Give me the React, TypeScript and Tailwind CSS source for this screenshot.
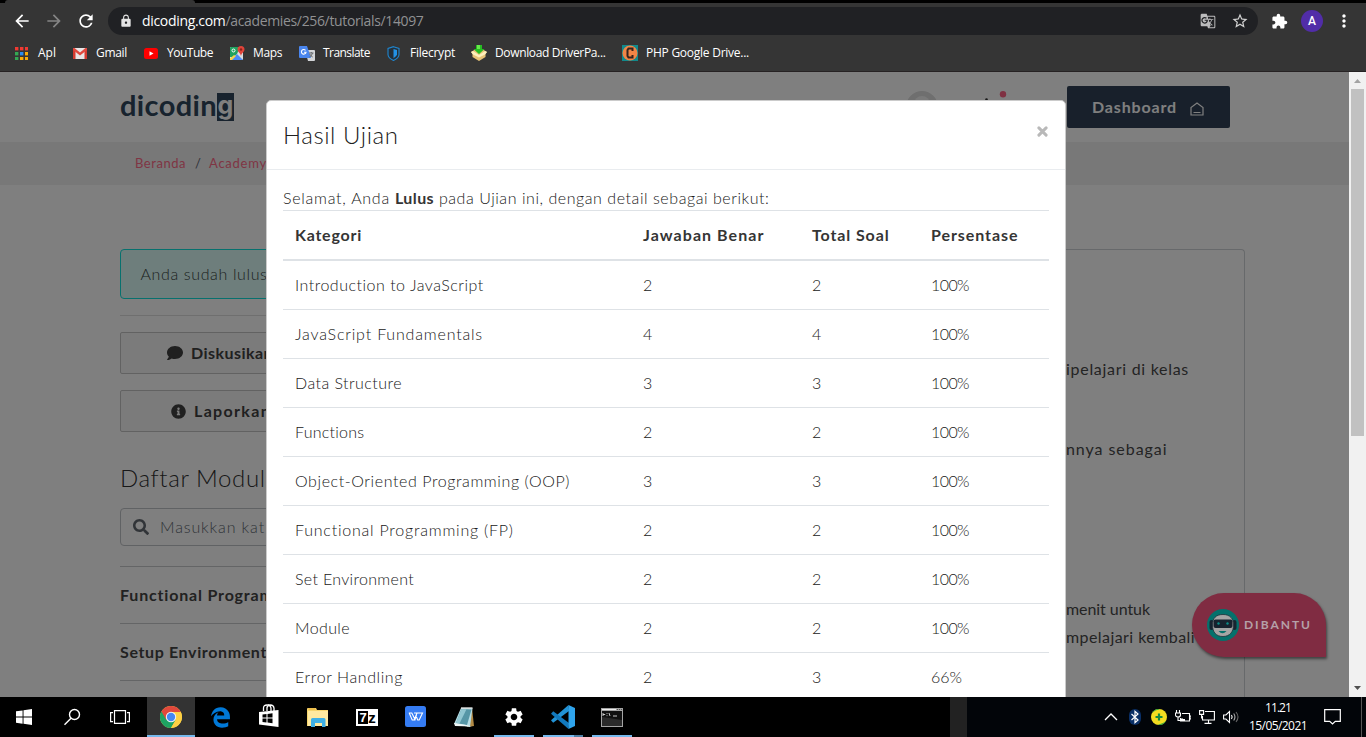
import { useLayoutEffect, useRef, useState, type ReactNode } from "react";
import { FaComment, FaInfoCircle, FaSearch } from "react-icons/fa";
import { FaEdgeLegacy } from "react-icons/fa6";
import { MdArrowBack, MdArrowForward, MdExtension, MdGTranslate, MdLock, MdMoreVert, MdRefresh, MdSettings, MdStarBorder } from "react-icons/md";

/** Single-line text whose tracking is adjusted so that it spans `w` pixels. */
function Fit({ w, children, className = "" }: { w: number; children: string; className?: string }) {
  const ref = useRef<HTMLSpanElement>(null);
  const [spacing, setSpacing] = useState(0);
  useLayoutEffect(() => {
    const el = ref.current;
    if (!el) return;
    el.style.letterSpacing = "0px";
    const natural = el.getBoundingClientRect().width;
    setSpacing((w - natural) / children.length);
    el.style.letterSpacing = `${(w - natural) / children.length}px`;
  }, [w, children]);
  return (
    <span ref={ref} className={`inline-block whitespace-pre ${className}`} style={{ letterSpacing: `${spacing}px` }}>
      {children}
    </span>
  );
}

const AppsIcon = () => (
  <svg width="13" height="13" viewBox="0 0 13 13">
    {["#f03a32", "#f03a32", "#f03a32", "#34a853", "#2b8cf0", "#fbab06", "#34a853", "#fbab06", "#fbab06"].map((c, i) => (
      <rect key={i} x={(i % 3) * 5} y={Math.floor(i / 3) * 5} width="3.4" height="3.4" fill={c} />
    ))}
  </svg>
);
const GmailIcon = () => (
  <svg width="14" height="11" viewBox="0 0 14 11">
    <rect width="14" height="11" rx="1" fill="#e9e6e6" />
    <path d="M0 11V1l2.500 2v8zM14 11V1l-2.500 2v8z" fill="#d63b30" />
    <path d="M0 0h1.500L7 4.600 12.500 0H14v2L7 7.500 0 2z" fill="#e2483d" />
  </svg>
);
const YoutubeIcon = () => (
  <svg width="14" height="11" viewBox="0 0 14 11">
    <rect width="14" height="11" rx="2.500" fill="#f00" />
    <path d="M5.500 3.200v4.600l4-2.300z" fill="#fff" />
  </svg>
);
const MapsIcon = () => (
  <svg width="15" height="15" viewBox="0 0 15 15">
    <rect y="1" width="13" height="13" rx="1" fill="#d9dce0" />
    <path d="M0 2q0-1 1-1h9L7 8l-3.500 3L0 11z" fill="#1fa25f" />
    <path d="M1 14l6-6 6 6z" fill="#4a8af4" />
    <path d="M0 12.500 4 9l2 1-4 4H0z" fill="#f7d34a" />
    <circle cx="3.500" cy="4.500" r="1.500" fill="none" stroke="#fff" />
    <path d="M11 0a3.500 3.500 0 0 1 3.500 3.500C14.500 6 11.500 7 11 10 10.500 7 7.500 6 7.500 3.500A3.500 3.500 0 0 1 11 0z" fill="#e0443a" />
    <circle cx="11" cy="3.500" r="1.200" fill="#8c2119" />
  </svg>
);
const TranslateIcon = () => (
  <svg width="16" height="15" viewBox="0 0 16 15">
    <path d="M6 4h9q1 0 1 1v9q0 1-1 1H9z" fill="#d3d5d8" />
    <path d="M1 0h7l4 12H1q-1 0-1-1V1q0-1 1-1z" fill="#4a86ee" />
    <path d="M6.500 4.300A2.300 2.300 0 1 0 7 6.300H5" fill="none" stroke="#fff" strokeWidth="1.100" />
    <path d="M10 7h4.500M12.300 6v1m1.200 0q-.7 3-3 4m.2-3q1 2 3 3" fill="none" stroke="#63676c" />
  </svg>
);
const ShieldIcon = () => (
  <svg width="13" height="15" viewBox="0 0 13 15">
    <path d="M6.500.7 12 2.500v6q0 3.500-5.500 6Q1 12 1 8.500v-6z" fill="#252f38" stroke="#1f86cf" strokeWidth="1.100" />
    <path d="M6.500 3 10 4v4.300q0 2-3.500 4z" fill="#2292e6" />
  </svg>
);
const DownloadIcon = () => (
  <svg width="16" height="16" viewBox="0 0 16 16">
    <path d="M0 7 4 4.500h8L16 7l-1.500 2v3L8 16l-6.500-4V9z" fill="#e7c377" />
    <path d="m0 7 2-1 6 4 6-4 2 1-2 2.500-6 3-6-3z" fill="#fff0bd" />
    <path d="M5 0h6v4h2.500L8 9 2.500 4H5z" fill="#26bd22" />
    <path d="M6 0h3v4H6z" fill="#68e84a" />
  </svg>
);
const PhpIcon = () => (
  <svg width="16" height="16" viewBox="0 0 16 16">
    <rect width="16" height="16" fill="#11898c" />
    <circle cx="8" cy="8" r="7.500" fill="#f28546" />
    <path d="M10.500 6V3.500h-4L5.500 5v6l1 1.500h4V10" fill="none" stroke="#35231c" strokeWidth="2" />
  </svg>
);

const bookmarks: { icon: ReactNode; label: string; box: string; gap: string; w: number }[] = [
  { icon: <AppsIcon />, label: "Apl", box: "w-[58px]", gap: "w-[23px]", w: 18 },
  { icon: <GmailIcon />, label: "Gmail", box: "w-[71px]", gap: "w-[23px]", w: 31 },
  { icon: <YoutubeIcon />, label: "YouTube", box: "w-[86px]", gap: "w-[23px]", w: 46 },
  { icon: <MapsIcon />, label: "Maps", box: "w-[69px]", gap: "w-[23px]", w: 29 },
  { icon: <TranslateIcon />, label: "Translate", box: "w-[88px]", gap: "w-[24px]", w: 47 },
  { icon: <ShieldIcon />, label: "Filecrypt", box: "w-[84px]", gap: "w-[23px]", w: 45 },
  { icon: <DownloadIcon />, label: "Download DriverPa...", box: "w-[151px]", gap: "w-[24px]", w: 110.5 },
  { icon: <PhpIcon />, label: "PHP Google Drive...", box: "w-[130px]", gap: "w-[24px]", w: 103 },
];

function BrowserChrome() {
  return (
    <header className="flex h-[72px] shrink-0 flex-col border-b border-[#262223] bg-[#353535] font-['Open_Sans','Noto_Sans',sans-serif]">
      <div className="flex h-[3px] bg-black pl-[5px]">
        <div className="h-[3px] w-[190px] rounded-t-sm bg-[#353535]" />
      </div>
      <div className="flex h-[36px] items-center">
        <div className="flex w-[108px] items-center gap-[12px] pl-3 text-xl">
          <MdArrowBack className="text-white" />
          <MdArrowForward className="text-[#858585]" />
          <MdRefresh className="text-white" />
        </div>
        <div className="flex h-7 w-[1150px] items-center rounded-full bg-[#202124] pr-[9px] pl-[11px]">
          <MdLock className="mr-[9px] size-[14px] text-[#e4e4e4]" />
          <span className="text-sm leading-5 text-white"><Fit w={83.5}>dicoding.com</Fit></span>
          <span className="text-sm leading-5 text-[#909193]"><Fit w={198}>/academies/256/tutorials/14097</Fit></span>
          <MdGTranslate className="ml-auto size-4 text-[#bcbcbd]" />
          <MdStarBorder className="ml-[15px] size-[18px] text-[#d2d2d2]" />
        </div>
        <MdExtension className="ml-[13px] size-[17px] text-white" />
        <div className="ml-[13px] flex size-[22px] items-center justify-center rounded-full bg-[#512da8] font-[Roboto,sans-serif] text-[12px] font-medium text-white">A</div>
        <MdMoreVert className="ml-[11px] size-5 text-white" />
      </div>
      <div className="flex h-[28px] items-center pl-[15px] text-xs text-white">
        {bookmarks.map((b) => (
          <div key={b.label} className={`flex shrink-0 items-center ${b.box}`}>
            <span className={`shrink-0 ${b.gap}`}>{b.icon}</span>
            <Fit w={b.w}>{b.label}</Fit>
          </div>
        ))}
      </div>
    </header>
  );
}

function SiteHeader() {
  return (
    <>
      <div className="flex h-[70px] bg-white pl-[120px]">
        <div className="mt-[21px] flex h-[28px] text-[#30475c]">
          <span className="w-[97px] text-[29px] leading-[24px] font-bold"><Fit w={97}>dicodin</Fit></span>
          <span className="flex h-[28px] w-[17px] justify-center bg-[#30475c] font-[Inter,sans-serif] text-[25px] leading-[24px] font-bold text-white">g</span>
        </div>
        <div className="mt-[19px] ml-[672px] w-[34px]">
          <svg width="32" height="32" viewBox="0 0 32 32">
            <circle cx="16" cy="16" r="16" fill="#dedede" />
            <circle cx="16" cy="13" r="8" fill="#f5f5f5" />
          </svg>
        </div>
        <div className="mt-[19px] ml-[24px] w-[103px]">
          <svg width="45" height="20" viewBox="0 0 45 20">
            <circle cx="39" cy="3.200" r="3.200" fill="#ff6384" />
            <circle cx="22.500" cy="8.500" r="1.300" fill="#303030" />
            <path d="M16 20q0-10 6.500-11T29 20z" fill="#303030" />
          </svg>
        </div>
        <div className="mt-[14px] flex h-[42px] w-[163px] items-center rounded-[2px] bg-[#304156] pl-[25px] text-base font-bold text-white">
          <Fit w={85} className="pb-px">Dashboard</Fit>
          <svg className="mt-[3px] ml-[13px]" width="14" height="14" viewBox="0 0 14 14" fill="none" stroke="#fff" strokeWidth="1.200">
            <path d="M1 13V5.500L7 1l6 4.500V13zM3.500 10.500h7" />
          </svg>
        </div>
      </div>
      <div className="flex h-[43px] items-center bg-[#f0f0f0] pl-[135px] text-[13px] text-[#ff6b88]">
        <Fit w={51}>Beranda</Fit>
        <span className="mx-[9px] w-[5px] text-[#5b6570]">/</span>
        <Fit w={58}>Academy</Fit>
      </div>
    </>
  );
}

function Sidebar() {
  return (
    <aside className="flex w-[350px] flex-col text-base font-light text-[#303030]">
      <div className="flex h-[50px] items-center rounded border border-[#0ee2dc] bg-[#ddfcf8] pl-[19.500px] text-[#37443f]">
        <Fit w={127}>Anda sudah lulus</Fit>
      </div>
      <div className="mt-4 h-px bg-[#dedede]" />
      <div className="mt-4 flex h-[42px] items-center rounded-[2px] border border-[#c4c4c4] bg-[#f7f7f7] pl-[46px] font-bold text-[#404040]">
        <FaComment className="mr-[8px] size-4" />
        <Fit w={82}>Diskusikan</Fit>
      </div>
      <div className="mt-4 flex h-[42px] items-center rounded-[2px] border border-[#c4c4c4] bg-[#f7f7f7] pl-[50px] font-bold text-[#404040]">
        <FaInfoCircle className="mr-[8px] size-[15px]" />
        <Fit w={77}>Laporkan</Fit>
      </div>
      <h2 className="mt-[30px] h-8 text-2xl leading-8"><Fit w={145}>Daftar Modul</Fit></h2>
      <div className="mt-[14px] flex h-[38px] items-center rounded border border-[#c0c4c8] pl-3 text-[#606870]">
        <FaSearch className="mr-[11px] size-4 text-[#626970]" />
        <Fit w={105}>Masukkan kat</Fit>
      </div>
      <div className="mt-5 flex h-[57px] items-center border-t border-[#c9cbcd] font-bold text-[#444]"><Fit w={154}>Functional Program</Fit></div>
      <div className="flex h-[57px] items-center border-t border-[#c9cbcd] font-bold text-[#444]"><Fit w={147}>Setup Environment</Fit></div>
      <div className="h-px bg-[#c9cbcd]" />
    </aside>
  );
}

function Article() {
  return (
    <section className="mr-[104px] ml-auto flex h-[448px] w-[700px] flex-col overflow-hidden rounded-t-[4px] border border-b-0 border-[#cfd2d6] pt-[105px] pl-[520px] text-base leading-7 whitespace-nowrap text-[#484848]">
      <p className="h-20"><Fit w={123}>ipelajari di kelas</Fit></p>
      <p className="h-[160px]"><Fit w={101.5}>nnya sebagai</Fit></p>
      <p className="h-7"><Fit w={84}>menit untuk</Fit></p>
      <p><Fit w={129}>mpelajari kembali</Fit></p>
    </section>
  );
}

const rows: [string, number, string, string, string][] = [
  ["Introduction to JavaScript", 189, "2", "2", "100%"],
  ["JavaScript Fundamentals", 188, "4", "4", "100%"],
  ["Data Structure", 107, "3", "3", "100%"],
  ["Functions", 69.5, "2", "2", "100%"],
  ["Object-Oriented Programming (OOP)", 275, "3", "3", "100%"],
  ["Functional Programming (FP)", 219, "2", "2", "100%"],
  ["Set Environment", 119, "2", "2", "100%"],
  ["Module", 55, "2", "2", "100%"],
  ["Error Handling", 108, "2", "3", "66%"],
];

function ResultModal() {
  return (
    <div className="absolute top-[28px] left-[266px] h-[620px] w-[800px] overflow-hidden rounded-[5px] border border-[#cbcbcb] bg-white text-base font-light text-[#202020]">
      <div className="flex h-[69px] items-start justify-between border-b border-[#e9ecef] px-4 pt-4">
        <h1 className="text-2xl leading-9"><Fit w={115.5}>Hasil Ujian</Fit></h1>
        <svg className="mt-[9px] mr-px" width="11" height="11" viewBox="0 0 11 11" stroke="#b9b9b9" strokeWidth="3" strokeLinecap="round">
          <path d="m1.900 1.900 7.200 7.200m0-7.200-7.200 7.200" />
        </svg>
      </div>
      <div className="px-4 pt-4">
        <p className="h-6 leading-6">
          <Fit w={112}>{"Selamat, Anda "}</Fit>
          <Fit w={39} className="font-bold text-[#353535]">Lulus</Fit>
          <Fit w={335.500}>{" pada Ujian ini, dengan detail sebagai berikut:"}</Fit>
        </p>
        <div className="grid h-[51px] grid-cols-[348px_169px_119px_1fr] items-center border-t border-b-2 border-[#dee2e6] pl-3 font-bold text-[#353535]">
          <span><Fit w={67}>Kategori</Fit></span>
          <span><Fit w={121.500}>Jawaban Benar</Fit></span>
          <span><Fit w={77.500}>Total Soal</Fit></span>
          <span><Fit w={87.500}>Persentase</Fit></span>
        </div>
        {rows.map(([name, w, right, total, pct]) => (
          <div key={name} className="grid h-[49px] grid-cols-[348px_169px_119px_1fr] items-center border-b border-[#dee2e6] pl-3">
            <span><Fit w={w}>{name}</Fit></span>
            <span>{right}</span>
            <span>{total}</span>
            <span><Fit w={pct === "66%" ? 31 : 38}>{pct}</Fit></span>
          </div>
        ))}
      </div>
    </div>
  );
}

function HelpBubble() {
  return (
    <div className="absolute top-[521px] right-[23px] flex h-16 w-[134px] items-center rounded-[32px] rounded-br-none bg-[#802c42] pl-[15px] text-xs font-bold text-[#b5a0a8] shadow-[1px_2px_3px_rgba(0,0,0,0.5)]">
      <svg className="mr-[5px]" width="32" height="32" viewBox="0 0 32 32">
        <circle cx="16" cy="16" r="16" fill="#04716c" />
        <rect x="2.500" y="11" width="4" height="10" rx="2" fill="#172531" />
        <rect x="25.500" y="11" width="4" height="10" rx="2" fill="#172531" />
        <path d="M16 5.500c7 0 10.500 4 10.500 10.500S23 27.500 16 27.500 5.500 23 5.500 16 9 5.500 16 5.500z" fill="#a5a5a5" stroke="#20303a" strokeWidth=".8" />
        <rect x="6.500" y="10.500" width="19" height="8.500" rx="2" fill="#17222e" />
        <circle cx="11.500" cy="14.500" r="1.200" fill="#0a8d88" />
        <circle cx="20.500" cy="14.500" r="1.200" fill="#0a8d88" />
        <path d="M11.500 22h8q-4 4.500-8 0z" fill="#04716c" />
      </svg>
      <Fit w={68}>DIBANTU</Fit>
    </div>
  );
}

function Scrollbar() {
  return (
    <div className="flex h-full w-[17px] shrink-0 flex-col items-center bg-[#f1f1f1]">
      <svg width="17" height="17" viewBox="0 0 17 17"><path d="M5 11h7L8.500 7z" fill="#a3a3a3" /></svg>
      <div className="h-[347px] w-[13px] bg-[#c1c1c1]" />
      <svg className="mt-auto" width="17" height="17" viewBox="0 0 17 17"><path d="M5 6h7l-3.500 4z" fill="#505050" /></svg>
    </div>
  );
}

const StartIcon = () => (
  <svg width="16" height="16" viewBox="0 0 16 16" fill="#fff">
    <path d="M0 2.300 6.600 1.400v6.200H0zM7.500 1.200 16 0v7.600H7.500zM0 8.500h6.600v6.200L0 13.800zM7.500 8.500H16V16l-8.500-1.200z" />
  </svg>
);
const SearchGlyph = () => (
  <svg width="18" height="18" viewBox="0 0 18 18" fill="none" stroke="#fff" strokeWidth="1.400">
    <circle cx="11.500" cy="6.500" r="5" /><path d="M8 10.300 1.500 16.800" />
  </svg>
);
const TaskView = () => (
  <svg width="20" height="14" viewBox="0 0 20 14" fill="none" stroke="#fff" strokeWidth="1.200">
    <path d="M4.500.6h11v12.800h-11zM3 2.600H.6v9H3M17 2.600h2.400v9H17" />
  </svg>
);
const ChromeIcon = () => (
  <svg width="22" height="22" viewBox="0 0 22 22">
    <circle cx="11" cy="11" r="11" fill="#fdd043" />
    <path d="M11 11 1.470 5.500A11 11 0 0 0 11 22l4.800-8.300z" fill="#1ea362" />
    <path d="M11 11V6h9.800A11 11 0 0 0 1.470 5.500L6.200 13.700z" fill="#e0483c" />
    <path d="M20.800 6H11l4.800 7.700L11 22A11 11 0 0 0 20.800 6z" fill="#fdd043" />
    <circle cx="11" cy="11" r="5.200" fill="#f4f4f4" />
    <circle cx="11" cy="11" r="4.200" fill="#4587f3" />
  </svg>
);
const StoreIcon = () => (
  <svg width="22" height="24" viewBox="0 0 22 24">
    <path d="M1 8 20.500 6v17L1 20.500z" fill="#fff" />
    <path d="M5.500 7V4q0-3 3.500-3t4 3v3M9 7V3.500Q9.500 1 12.500 1T16 4v3" fill="none" stroke="#fff" strokeWidth="1.300" />
    <path d="M4.500 10.500 8.500 10v3.500h-4zM9.500 9.900l5-.6v4.200h-5zM4.500 14.500h4v4l-4-.5zM9.500 14.500h5v4.700l-5-.6z" fill="#000" />
  </svg>
);
const FolderIcon = () => (
  <svg width="22" height="19" viewBox="0 0 22 19">
    <path d="M0 1q0-1 1-1h8l1 2h11v16H0z" fill="#f7d56d" />
    <path d="M1 3h20v15H1z" fill="#ffe9a0" /><path d="M1.500 1h7" stroke="#e3a72b" />
    <path d="M4 11.500q0-1.500 1.500-1.500H17q1.500 0 1.500 1.500V19H15v-4H8v4H4z" fill="#3fb0e6" />
  </svg>
);
const SevenZip = () => (
  <div className="flex h-[17px] w-[22px] items-center bg-white p-[2px]">
    <span className="flex h-[13px] w-[10px] items-center justify-center bg-black font-['Liberation_Sans',sans-serif] text-[13px] leading-none font-bold text-white">7</span>
    <span className="w-[8px] text-center font-['Liberation_Sans',sans-serif] text-[15px] leading-none font-bold text-black">z</span>
  </div>
);
const WpsIcon = () => (
  <svg width="21" height="21" viewBox="0 0 21 21">
    <rect width="21" height="21" rx="2.500" fill="#357cf3" />
    <path d="M3.800 7h3l3.200 6.500L11.500 9M4.200 7l3 7h2l2.800-7h5.500l-3.300 7h-1.500l-2-5M9 7h3" fill="none" stroke="#fff" strokeWidth="1.100" />
  </svg>
);
const NotepadIcon = () => (
  <svg width="22" height="22" viewBox="0 0 22 22">
    <path d="m19 2 2 18-7 1z" fill="#b28a45" />
    <path d="M8 2 19.500 2 17 21 1 18z" fill="#b5dce4" />
    <path d="m8.500 3 10 .5L14 19 3 17z" fill="#5696a6" /><path d="m8.500 3 5 .3L6.500 17.500 3 17z" fill="#91c6d1" />
    <path d="M8 2h11.500" stroke="#e0e0e0" strokeWidth="1.400" />
    <path d="m1 17 12 2 6 1.500-17-.5z" fill="#eef5f5" />
  </svg>
);
const CodeIcon = () => (
  <svg width="24" height="24" viewBox="0 0 24 24">
    <path d="M17.500 0 0 15.300l2.200 2.400L18 6z" fill="#2293d6" />
    <path d="M17.500 24 0 8.700l2.200-2.400L18 18z" fill="#1279bd" />
    <path d="M17.500 0 24 3v18l-6.500 3z" fill="#2fa4ec" />
  </svg>
);
const TerminalIcon = () => (
  <svg width="22" height="19" viewBox="0 0 22 19">
    <rect width="22" height="19" fill="#a3a3a3" /><rect x="1" y="3" width="20" height="15" fill="#101010" />
    <path d="M1 1.500h14" stroke="#ededed" /><path d="M16 1.500h5" stroke="#555" strokeDasharray="1 1" />
    <path d="M1 18V9l20 3v6z" fill="#2a2a2a" />
    <path d="M2 6.500h2.200M2 5v3M6 5v.8M6 7.300v.8M8 5l1 3M12 8h4" stroke="#ddd" strokeWidth=".9" />
  </svg>
);

const apps: { id: string; icon: ReactNode; cell: string; bar: string }[] = [
  { id: "chrome", icon: <ChromeIcon />, cell: "bg-[#333]", bar: "w-12 bg-[#76b9ed]" },
  { id: "edge", icon: <FaEdgeLegacy className="size-[21px] text-[#0078d7]" />, cell: "", bar: "w-0" },
  { id: "store", icon: <StoreIcon />, cell: "pb-[2px]", bar: "w-0" },
  { id: "files", icon: <FolderIcon />, cell: "", bar: "w-0" },
  { id: "zip", icon: <SevenZip />, cell: "", bar: "w-0" },
  { id: "wps", icon: <WpsIcon />, cell: "pr-px pb-px", bar: "w-0" },
  { id: "notes", icon: <NotepadIcon />, cell: "pr-[2px]", bar: "w-0" },
  { id: "settings", icon: <MdSettings className="size-[22px] text-white" />, cell: "", bar: "w-10 bg-[#76b9ed]" },
  { id: "code", icon: <CodeIcon />, cell: "", bar: "w-10 border-r-[9px] border-[#4f7fa5] bg-[#76b9ed]" },
  { id: "terminal", icon: <TerminalIcon />, cell: "", bar: "w-10 bg-[#76b9ed]" },
];

function Tray() {
  return (
    <div className="flex h-full w-[399px] items-center bg-[#020509] pl-[137px] text-white">
      <svg width="14" height="8" viewBox="0 0 14 8" fill="none" stroke="#fff" strokeWidth="1.300"><path d="m1 7 6-6 6 6" /></svg>
      <svg className="ml-[11px]" width="12" height="16" viewBox="0 0 12 16">
        <rect width="12" height="16" rx="6" fill="#092f66" />
        <path d="m2.500 5 6.500 6-3 2.700V2.300L9 5l-6.500 6" fill="none" stroke="#fff" strokeWidth="1.200" />
      </svg>
      <svg className="ml-[10px]" width="16" height="16" viewBox="0 0 16 16">
        <circle cx="8" cy="8" r="8" fill="#f3dc20" /><path d="M1 4Q4-1 9 .2 4 1 1 4zM15 12q-3 5-8 3.800 5-1 8-3.800z" fill="#38a53c" />
        <path d="M8 4.500v7M4.500 8h7" stroke="#148940" strokeWidth="2.200" />
      </svg>
      <svg className="ml-[8px]" width="16" height="14" viewBox="0 0 16 14" fill="none" stroke="#fff" strokeWidth="1.100">
        <path d="M7 3.500h7.500v7.500H5.500V8M14.500 6H16v3h-1.500M1.500 0v3M4.500 0v3M.5 3h5v2q0 2-2.500 2T.5 5zM3 7v3.500h2.500" /><path d="M7 8.500v1.500h3" strokeWidth="2" />
      </svg>
      <svg className="ml-[8px]" width="16" height="14" viewBox="0 0 16 14" fill="none" stroke="#fff" strokeWidth="1.100">
        <path d="M6 1.500h9.400v8.500H3.500V6M9.500 10v3M5.500 13.400h7M.6.600h4v3.800h-4zM2.600 4.400V8H3.500" />
      </svg>
      <svg className="ml-[8px]" width="17" height="14" viewBox="0 0 17 14" fill="none" stroke="#fff" strokeWidth="1.100">
        <path d="M.6 5h2.300L6.500 1.500v11L2.900 9H.6zM8.500 5q1.300 2 0 4" /><path d="M10.700 3.500q2.500 3.500 0 7" stroke="#aaa" /><path d="M13 2q4 5 0 10" stroke="#666" />
      </svg>
      <div className="ml-[8px] flex w-[60px] flex-col items-center text-xs leading-[18px]">
        <Fit w={26}>11.21</Fit>
        <Fit w={58}>15/05/2021</Fit>
      </div>
      <svg className="ml-[16px]" width="17" height="16" viewBox="0 0 17 16" fill="none" stroke="#fff" strokeWidth="1.200">
        <path d="M.7.700h15.600v11.600h-5L8.500 15l-2.800-2.700h-5z" />
      </svg>
      <div className="mr-1 ml-auto h-full w-px bg-[#555]" />
    </div>
  );
}

function Taskbar() {
  return (
    <footer className="flex h-10 shrink-0 bg-black font-['Open_Sans','Noto_Sans',sans-serif]">
      <div className="mr-[3px] flex w-36 items-center">
        <div className="flex w-12 justify-center"><StartIcon /></div>
        <div className="flex w-12 justify-center"><SearchGlyph /></div>
        <div className="flex w-12 justify-center"><TaskView /></div>
      </div>
      {apps.map((a) => (
        <div key={a.id} className={`mr-px flex h-10 w-12 flex-col items-center ${a.cell}`}>
          <div className="flex w-full flex-1 items-center justify-center pt-[2px]">{a.icon}</div>
          <div className={`h-[2px] ${a.bar}`} />
        </div>
      ))}
      <div className="ml-auto w-[17px] bg-[#222]" />
      <Tray />
    </footer>
  );
}

export default function App() {
  return (
    <div className="flex h-[737px] w-[1366px] flex-col overflow-hidden bg-black">
      <BrowserChrome />
      <div className="flex h-[625px] shrink-0 overflow-hidden font-[Lato,'Open_Sans',sans-serif]">
        <main className="relative h-full w-[1349px] overflow-hidden bg-white">
          <SiteHeader />
          <div className="mt-16 flex pl-[120px]">
            <Sidebar />
            <Article />
          </div>
          <div className="absolute inset-0 bg-black/50" />
          <HelpBubble />
          <ResultModal />
        </main>
        <Scrollbar />
      </div>
      <Taskbar />
    </div>
  );
}
